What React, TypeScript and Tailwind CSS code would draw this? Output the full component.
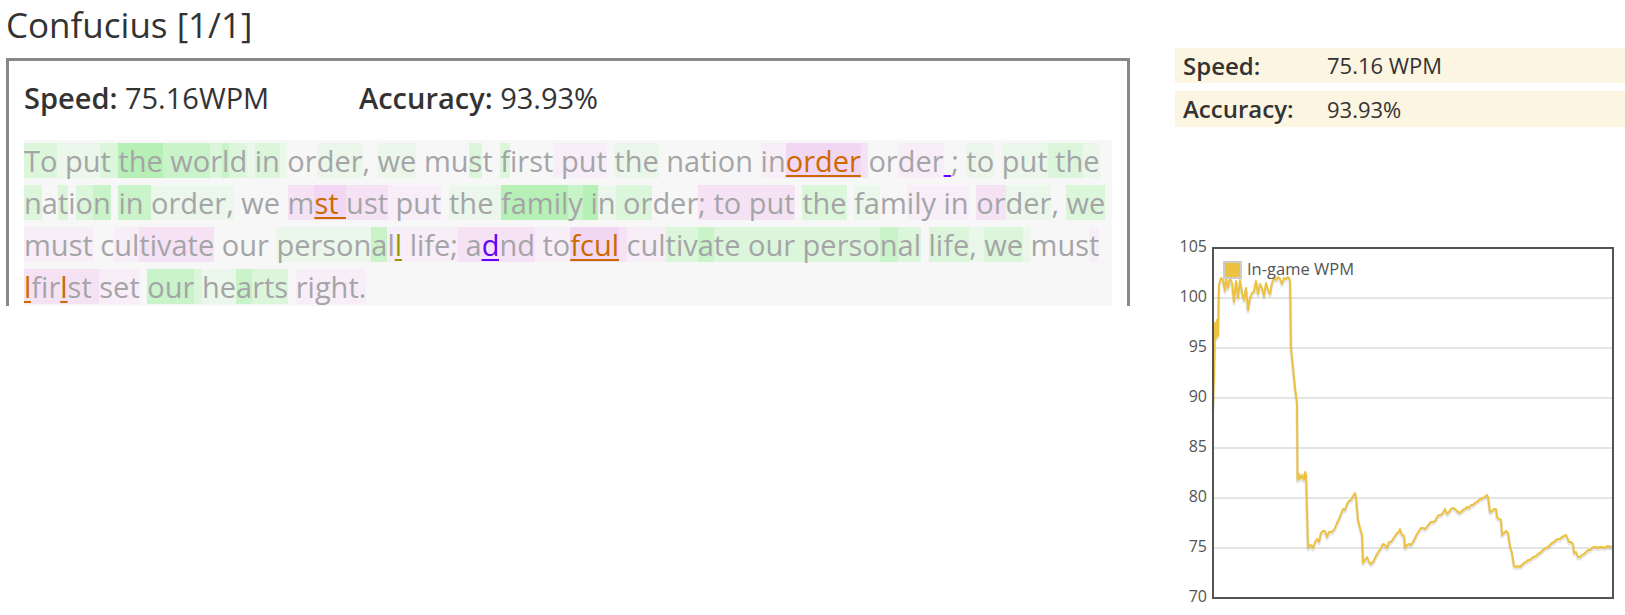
import React from "react";

type Seg = [string, string, string?];

const BG: Record<string, string> = {
  "": "",
  a: "bg-[#eaf7ea]",
  b: "bg-[#dcf6dc]",
  c: "bg-[#c9f3c9]",
  d: "bg-[#b6f0b6]",
  p: "bg-[#f8eef8]",
  q: "bg-[#f5e3f5]",
  r: "bg-[#f2d7f2]",
};

const MISTAKE: Record<string, string> = {
  o: "text-[#cc6a00] underline decoration-2 underline-offset-[3px]",
  u: "text-[#6600ff] underline decoration-2 underline-offset-[3px]",
  y: "text-[#9a9a00] underline decoration-2 underline-offset-[3px]",
};

const lines: Seg[][] = [
  [
    ["To", "b"], [" pu", "a"], ["t ", "b"], ["the", "d"], [" wo", "c"], ["r", "b"], ["l", "c"], ["d", "b"],
    [" ", "a"], ["in", "b"], [" ", "a"], ["or", ""], ["der", "a"], [", ", ""], ["we", "a"], [" mu", ""],
    ["s", "b"], ["t ", ""], ["f", "b"], ["irst", ""], [" put", "p"], [" ", ""], ["the", "a"],
    [" nation ", ""], ["in", "p"], ["order", "r", "o"], [" ", "q"], ["or", ""], ["der", "p"], [" ", "", "u"],
    [";", ""], [" ", ""], ["to", "a"], [" ", ""], ["put", "a"], [" th", "b"], ["e", "a"],
  ],
  [
    ["n", "b"], ["a", ""], ["t", "b"], ["i", ""], ["o", "b"], ["n", "c"], [" ", ""], ["in ", "c"],
    ["order,", "a"], [" we ", ""], ["m", "q"], ["st ", "r", "o"], ["ust", "q"], [" put", "p"], [" ", ""],
    ["the", "a"], [" ", "a"], ["famil", "d"], ["y", "c"], [" i", "d"], ["n", "a"], [" o", "b"], ["r", "b"],
    ["der", ""], ["; to put", "q"], [" ", ""], ["the", "b"], [" ", ""], ["fa", "a"], ["m", ""], ["ily", "p"],
    [" in", "p"], [" ", ""], ["or", "q"], ["der", "a"], [", ", ""], ["we", "b"],
  ],
  [
    ["must", "p"], [" c", ""], ["ul", "p"], ["tivate", "q"], [" our ", ""], ["per", "a"], ["son", "a"],
    ["a", "c"], ["l", "p"], ["l", "p", "y"], [" life;", "p"], [" a", "q"], ["d", "q", "u"], ["nd", "q"],
    [" to", "p"], ["fcul", "r", "o"], [" ", "q"], ["cul", "p"], ["tiv", "b"], ["a", "c"],
    ["te our perso", "b"], ["n", "c"], ["al", "b"], [" ", ""], ["life", "b"], [", ", "a"], ["we", "b"],
    [" ", "a"], ["mus", ""], ["t", "p"],
  ],
  [
    ["l", "q", "o"], ["fir", "q"], ["l", "q", "o"], ["st ", "q"], ["set", "p"], [" ", ""], ["our", "c"],
    [" ", "b"], ["he", "a"], ["a", "c"], ["rts", "b"], [" ", ""], ["right.", "p"],
  ],
];

// [x in page px, wpm]
const raw: [number, number][] = [
  [1213, 89], [1214, 92], [1215, 97.5], [1216, 96], [1217, 97.8], [1218, 96.2], [1219, 101.3],
  [1221, 102], [1223, 101.8], [1225, 100.7], [1226, 102], [1228, 101], [1230, 102], [1232, 101.5],
  [1234, 99.6], [1236, 101.7], [1238, 100], [1240, 101.8], [1242, 100.5], [1244, 99.8], [1246, 101],
  [1248, 98.8], [1250, 100], [1252, 100.5], [1254, 100.6], [1256, 101.7], [1258, 100.4], [1260, 101.4],
  [1262, 101], [1264, 100.2], [1266, 101.5], [1268, 100.8], [1270, 100.4], [1272, 101.5], [1274, 102],
  [1276, 101.8], [1278, 102.1], [1280, 101.9], [1282, 101.4], [1284, 102], [1286, 101.9], [1288, 102.1],
  [1290, 101.8], [1291, 95], [1293, 93], [1295, 91], [1297, 89.5], [1297.5, 81.8], [1299, 82.4],
  [1300, 81.9], [1302, 82.3], [1304, 81.8], [1305, 82.6], [1306, 82.4], [1308, 75], [1310, 75.3],
  [1312, 75.2], [1313, 75], [1315, 75.6], [1317, 75.9], [1319, 75.6], [1321, 76.5], [1323, 76.7],
  [1325, 76.7], [1327, 76.1], [1329, 76.6], [1331, 76.6], [1333, 76.7], [1335, 77], [1337, 77.5],
  [1339, 77.9], [1341, 78.4], [1343, 78.9], [1345, 78.8], [1347, 79.4], [1349, 79.7], [1351, 79.8],
  [1353, 80.2], [1355, 80.5], [1356, 80.1], [1358, 77.8], [1360, 77], [1362, 76.3], [1363, 73.5],
  [1365, 73.8], [1367, 74.1], [1369, 73.6], [1371, 73.4], [1373, 73.6], [1375, 74], [1377, 74.4],
  [1379, 74.7], [1381, 75], [1383, 75.4], [1385, 75.3], [1387, 75], [1389, 75.6], [1391, 75.6],
  [1393, 75.9], [1395, 76.2], [1397, 76.5], [1399, 76.6], [1400, 76.9], [1402, 76.3], [1404, 76.2],
  [1405, 75], [1407, 75.3], [1409, 75.4], [1411, 75.3], [1413, 75.6], [1415, 76], [1417, 76.4],
  [1419, 76.7], [1421, 77], [1423, 77], [1425, 76.9], [1427, 77.1], [1429, 77.4], [1431, 77.6],
  [1433, 77.6], [1435, 77.7], [1437, 78.1], [1439, 78.3], [1441, 78.3], [1443, 78.5], [1445, 78.9],
  [1447, 78.4], [1449, 78.6], [1451, 78.9], [1453, 79], [1455, 78.9], [1457, 78.7], [1459, 78.5],
  [1461, 78.6], [1463, 78.8], [1465, 78.9], [1467, 79.1], [1469, 79], [1471, 79.3], [1473, 79.3],
  [1475, 79.5], [1477, 79.6], [1479, 79.8], [1481, 79.9], [1483, 80], [1485, 80.1], [1487, 80.3],
  [1488, 80.1], [1490, 78.6], [1492, 78.7], [1494, 78.9], [1496, 78.9], [1497, 78.1], [1499, 77.9],
  [1501, 77.8], [1502, 76.3], [1504, 76.5], [1506, 76.7], [1508, 76.5], [1510, 75.2], [1512, 74.5],
  [1514, 73.2], [1516, 73.1], [1518, 73.2], [1520, 73.1], [1522, 73.3], [1524, 73.5], [1526, 73.6],
  [1528, 73.8], [1530, 73.8], [1532, 74], [1534, 74.1], [1536, 74.2], [1538, 74.4], [1540, 74.5],
  [1542, 74.7], [1544, 74.9], [1546, 75], [1548, 75.1], [1550, 75.3], [1552, 75.5], [1554, 75.6],
  [1556, 75.8], [1558, 75.9], [1560, 75.9], [1562, 76.1], [1564, 76.2], [1566, 76.3], [1567, 76.1],
  [1569, 75.6], [1571, 75.6], [1573, 75.4], [1574, 74.5], [1576, 74.6], [1578, 74.1], [1580, 74.1],
  [1582, 74.3], [1584, 74.4], [1586, 74.6], [1588, 74.8], [1590, 74.8], [1592, 75], [1594, 75.1],
  [1596, 75.1], [1598, 75], [1600, 75.1], [1602, 75.1], [1604, 75], [1606, 75.1], [1608, 75.2],
  [1610, 75.1], [1613, 75.2],
];

const X0 = 1175;
const TOP = 18; // svg starts at page y 230, plot top at 248
const toY = (v: number) => TOP + (105 - v) * 10;
const pts = raw.map(([x, v]) => `${(x - X0).toFixed(1)},${toY(v).toFixed(1)}`).join(" ");
const shadow = raw.map(([x, v]) => `${(x - X0).toFixed(1)},${(toY(v) + 2).toFixed(1)}`).join(" ");

function WpmChart() {
  const ticks = [105, 100, 95, 90, 85, 80, 75, 70];
  return (
    <svg width={450} height={385} className="block">
      {ticks.slice(1, -1).map((t) => (
        <line key={t} x1={38} x2={438} y1={toY(t)} y2={toY(t)} stroke="#dcdcdc" strokeWidth={1.5} />
      ))}
      {ticks.map((t) => (
        <text
          key={t}
          x={32}
          y={toY(t)}
          textAnchor="end"
          dominantBaseline="middle"
          fontSize={16}
          fill="#545454"
          fontFamily="'Open Sans', sans-serif"
        >
          {t}
        </text>
      ))}
      <polyline points={shadow} fill="none" stroke="rgba(0,0,0,0.1)" strokeWidth={3} strokeLinejoin="round" />
      <polyline points={pts} fill="none" stroke="#edc240" strokeWidth={2} strokeLinejoin="round" />
      <rect x={38} y={TOP} width={400} height={350} fill="none" stroke="#545454" strokeWidth={2} />
      <rect x={49} y={TOP + 14} width={17} height={16} fill="#edc240" stroke="#cccccc" strokeWidth={2} />
      <text
        x={72}
        y={TOP + 23}
        dominantBaseline="middle"
        fontSize={16.5}
        fill="#545454"
        fontFamily="'Open Sans', sans-serif"
      >
        In-game WPM
      </text>
    </svg>
  );
}

export default function App() {
  return (
    <div className="flex bg-white font-['Open_Sans',sans-serif] text-[#333]">
      <div className="ml-[6px] w-[1124px] shrink-0">
        <h2 className="pt-[2px] text-[35px] leading-[45px] font-normal">Confucius [1/1]</h2>
        <div className="mt-[11px] h-[248px] overflow-hidden border-[3px] border-b-0 border-[#888] px-[15px] pt-[19px]">
          <div className="flex text-[29px] leading-[35px]">
            <div className="w-[335px]">
              <span className="font-semibold">Speed:</span> 75.16WPM
            </div>
            <div>
              <span className="font-semibold">Accuracy:</span> 93.93%
            </div>
          </div>
          <div className="mt-[25px] bg-[#f7f7f7] text-[29px] leading-[42px] text-[#a5a5a8]">
            {lines.map((line, i) => (
              <div key={i} className="whitespace-pre">
                {line.map(([t, bg, m], j) => (
                  <span key={j} className={`inline-block leading-[35px] ${BG[bg]} ${m ? MISTAKE[m] : ""}`}>
                    {t}
                  </span>
                ))}
              </div>
            ))}
          </div>
        </div>
      </div>
      <div className="ml-[45px] flex-1">
        <div className="mt-[48px] flex h-[35px] items-center bg-[#fcf5e2] pl-[8px] text-[22px]">
          <span className="w-[144px] text-[24px] font-semibold">Speed:</span>
          <span>75.16 WPM</span>
        </div>
        <div className="mt-[8px] flex h-[36px] items-center bg-[#fcf5e2] pl-[8px] text-[22px]">
          <span className="w-[144px] text-[24px] font-semibold">Accuracy:</span>
          <span>93.93%</span>
        </div>
        <div className="mt-[103px]">
          <WpmChart />
        </div>
      </div>
    </div>
  );
}
